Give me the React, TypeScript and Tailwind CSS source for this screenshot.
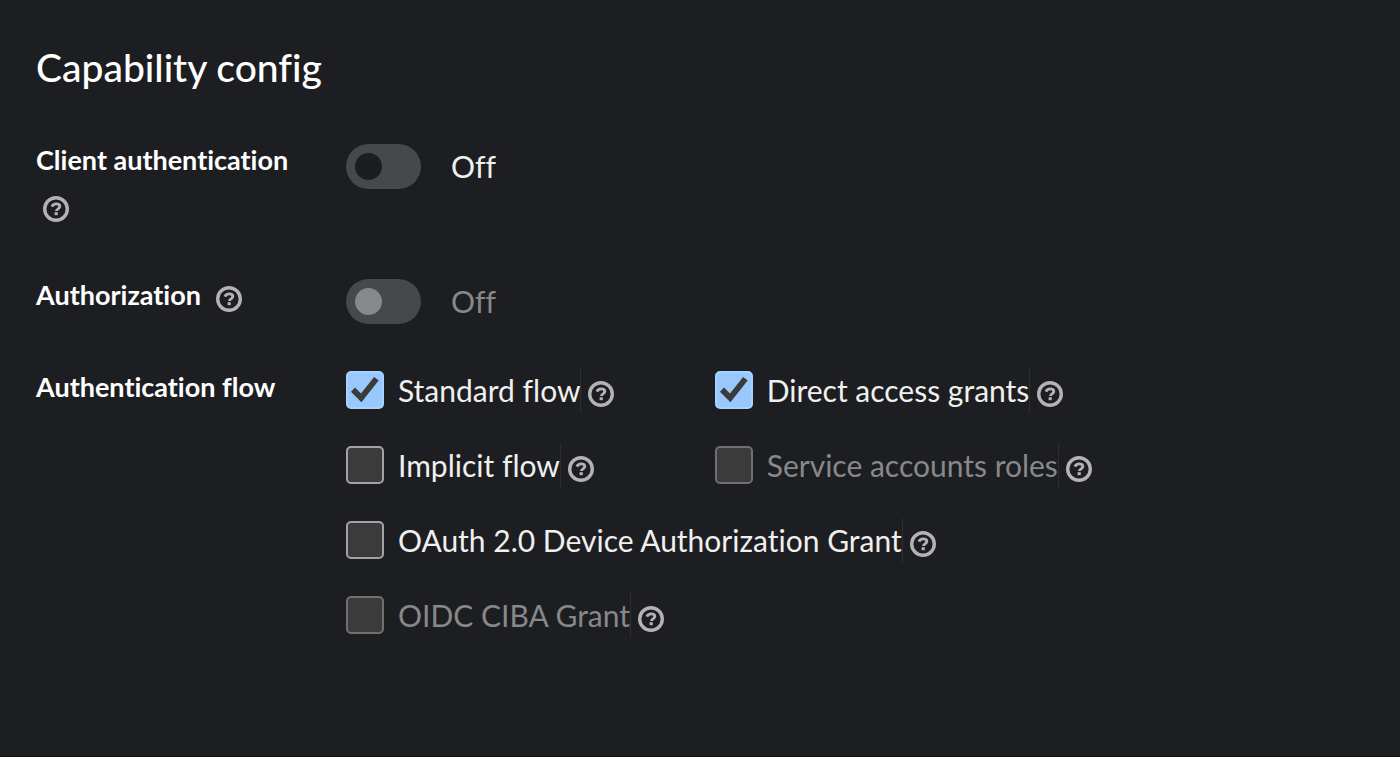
import { useId, useState } from 'react';
import type { ReactNode } from 'react';

interface FieldRowProps {
  label: string;
  htmlFor?: string;
  help?: boolean;
  children: ReactNode;
}

interface SwitchProps {
  id: string;
  disabled?: boolean;
}

interface FlowOption {
  label: string;
  checked?: boolean;
  disabled?: boolean;
  wide?: boolean;
}

const flowOptions: FlowOption[] = [
  { label: 'Standard flow', checked: true },
  { label: 'Direct access grants', checked: true },
  { label: 'Implicit flow' },
  { label: 'Service accounts roles', disabled: true },
  { label: 'OAuth 2.0 Device Authorization Grant', wide: true },
  { label: 'OIDC CIBA Grant', disabled: true, wide: true },
];

function HelpButton({ topic }: { topic: string }) {
  return (
    <button
      type="button"
      aria-label={`More info for ${topic}`}
      className="flex h-[39px] shrink-0 items-center px-[7px] text-[#b3b3b5] hover:text-white"
    >
      <svg viewBox="0 0 26 26" className="h-[26px] w-[26px]" fill="none" stroke="currentColor">
        <circle cx="13" cy="13" r="11.3" strokeWidth="3.4" />
        <path d="M8.9 10.6C9.7 8.7 11.2 7.9 13.2 7.9c2.1 0 3.6 1 3.6 2.7 0 2.2-3.4 2.3-3.4 4.5" strokeWidth="2.9" />
        <path d="M13.2 16.2v3" strokeWidth="3.2" />
      </svg>
    </button>
  );
}

function FieldRow({ label, htmlFor, help, children }: FieldRowProps) {
  return (
    <div className="grid grid-cols-[280px_1fr] gap-x-[30px]">
      <div className={`flex flex-wrap content-start items-start gap-x-2 gap-y-1.5 pb-1.5 ${help ? '' : 'pt-1'}`}>
        <label htmlFor={htmlFor} className="h-[39px] text-[27px] leading-[32px] font-bold text-white">
          {label}
        </label>
        {help && <HelpButton topic={label} />}
      </div>
      {children}
    </div>
  );
}

function Switch({ id, disabled }: SwitchProps) {
  const [on, setOn] = useState(false);

  return (
    <div className="flex h-[45px] items-center gap-[30px]">
      <button
        id={id}
        type="button"
        role="switch"
        aria-checked={on}
        disabled={disabled}
        onClick={() => setOn(!on)}
        className={`flex h-[45px] w-[75px] items-center rounded-full px-[9px] ${
          on ? 'justify-end bg-[#92c5f9]' : 'bg-[#47484b]'
        }`}
      >
        <span className={`h-[27px] w-[27px] rounded-full ${disabled ? 'bg-[#87888a]' : 'bg-[#1c1d21]'}`} />
      </button>
      <span className={disabled ? 'text-[#87888a]' : 'text-[#f0f0ee]'}>{on ? 'On' : 'Off'}</span>
    </div>
  );
}

function FlowCheckbox({ label, checked, disabled, wide }: FlowOption) {
  const id = useId();

  return (
    <div className={`flex items-center ${wide ? 'col-span-2' : ''}`}>
      <span className="grid shrink-0 place-items-center">
        <input
          id={id}
          type="checkbox"
          defaultChecked={checked}
          disabled={disabled}
          className="peer col-start-1 row-start-1 h-[38px] w-[38px] appearance-none rounded-[5px] border-2 border-[#a3a3a3] bg-[#3b3b3b] checked:border-[#a6d2ff] checked:bg-[#99c8ff] disabled:border-[#707070]"
        />
        <svg
          viewBox="0 0 38 38"
          className="pointer-events-none invisible col-start-1 row-start-1 h-[38px] w-[38px] peer-checked:visible"
          fill="none"
          stroke="#3b3b3b"
          strokeWidth="5.8"
        >
          <path d="M7 18.6l8.2 8.2L30.4 7.8" />
        </svg>
      </span>
      <label
        htmlFor={id}
        className={`ml-[14px] border-r border-[#2d2e33] whitespace-nowrap ${
          disabled ? 'text-[#87888a]' : 'text-[#f0f0ee]'
        }`}
      >
        {label}
      </label>
      <div className="mt-[7px]">
        <HelpButton topic={label} />
      </div>
    </div>
  );
}

export default function App() {
  return (
    <main className="min-h-screen border-b border-[#131316] bg-[#1d1e22] pt-[42px] pr-10 pl-9 font-[Lato,sans-serif] text-[30px] leading-[45px] [font-variant-ligatures:none]">
      <h1 className="text-[39px] leading-[50px] font-medium text-white">Capability config</h1>
      <form className="mt-[52px] flex flex-col gap-[43px]">
        <div className="flex flex-col gap-[45px]">
          <FieldRow label="Client authentication" htmlFor="client-authentication" help>
            <Switch id="client-authentication" />
          </FieldRow>
          <FieldRow label="Authorization" htmlFor="authorization" help>
            <Switch id="authorization" disabled />
          </FieldRow>
        </div>
        <FieldRow label="Authentication flow">
          <div role="group" aria-label="Authentication flow" className="grid grid-cols-[4fr_7fr] gap-y-[29px]">
            {flowOptions.map((option) => (
              <FlowCheckbox key={option.label} {...option} />
            ))}
          </div>
        </FieldRow>
      </form>
    </main>
  );
}
